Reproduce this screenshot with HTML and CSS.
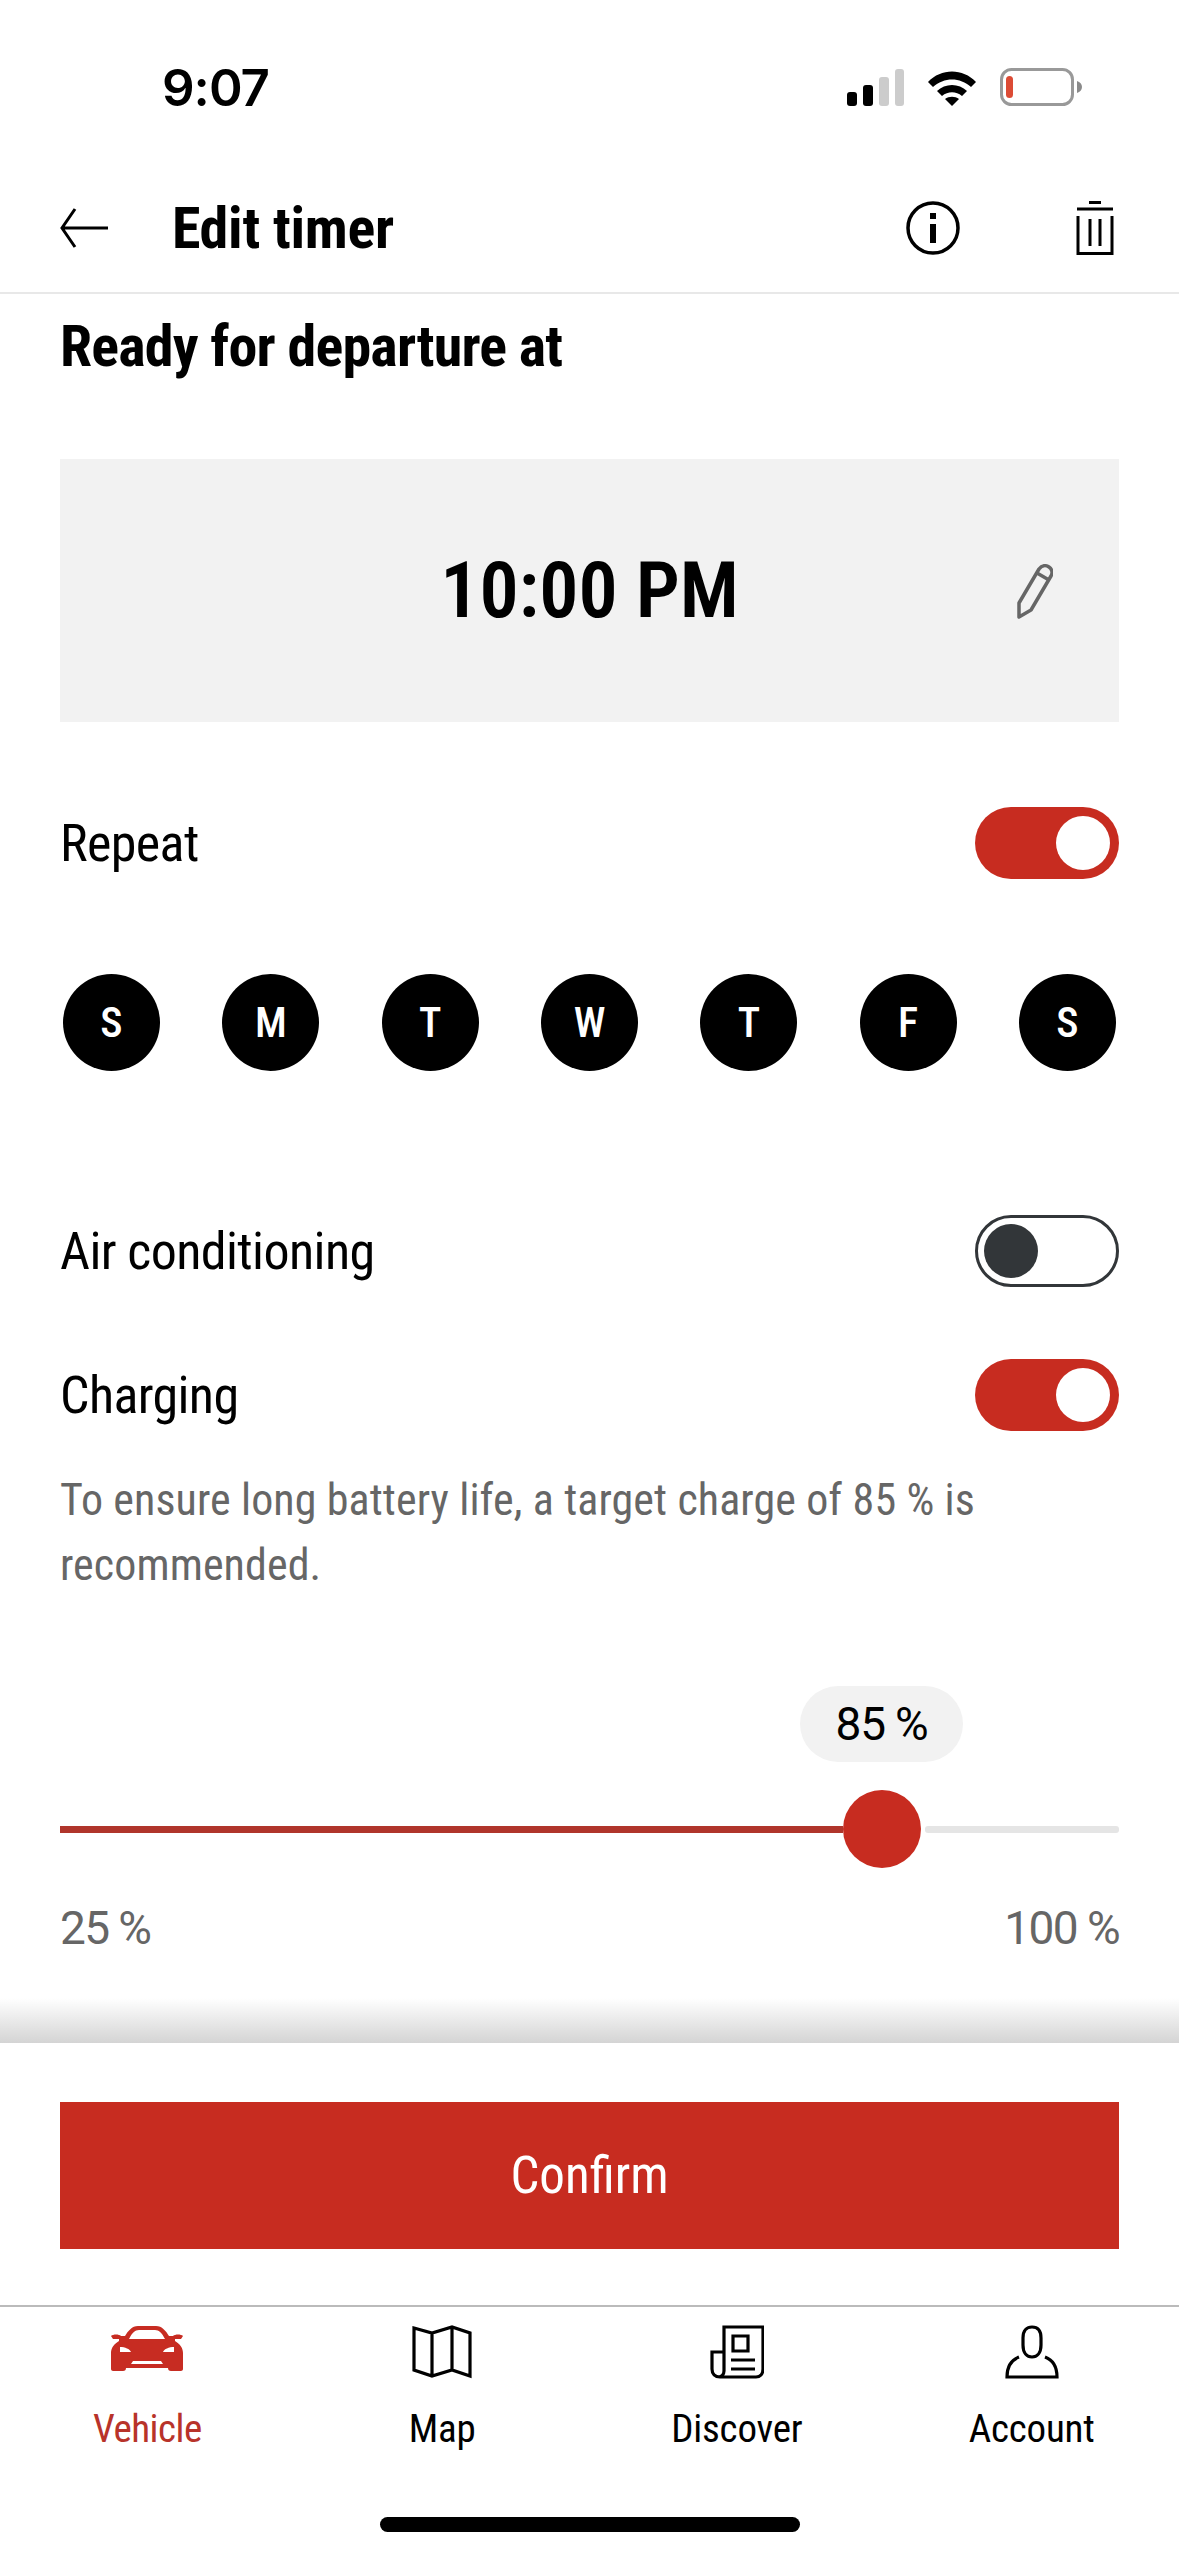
FILE: index.html
```html
<!doctype html>
<html lang="en">
    <head>
        <meta charset="UTF-8" />
        <meta name="viewport" content="width=device-width, initial-scale=1.0" />
        <title>Edit timer</title>
        <link rel="stylesheet" href="styles.css">
    </head>
    <body>
        <div class="screen">
            <!-- Status bar -->
            <div class="status-bar">
                <span class="clock">9:07</span>
                <div class="status-icons">
                    <svg class="signal" width="57" height="37" viewBox="0 0 57 37">
                        <rect x="0" y="23" width="10" height="14" rx="3" fill="#000" />
                        <rect x="16" y="16" width="10" height="21" rx="3" fill="#000" />
                        <rect x="32" y="8" width="10" height="29" rx="3" fill="#ccc" />
                        <rect x="48" y="0" width="9" height="37" rx="3" fill="#ccc" />
                    </svg>
                    <svg class="wifi" width="50" height="37" viewBox="0 0 50 37">
                        <path d="M1 13C14 -1 36 -1 49 13L44 18C33 8 17 8 6 18Z" fill="#000" />
                        <path d="M10 22C18 14 32 14 40 22L35 27C29 22 21 22 15 27Z" fill="#000" />
                        <path d="M18 30C22 27 28 27 32 30L25 37Z" fill="#000" />
                    </svg>
                    <svg class="battery" width="82" height="38" viewBox="0 0 82 38">
                        <rect x="1.5" y="1.5" width="71" height="35" rx="10" fill="#fff" stroke="#999" stroke-width="3" />
                        <rect x="6" y="8" width="7" height="22" rx="3.5" fill="#dc4b35" />
                        <path d="M77 13C80 14 82 16 82 19C82 22 80 24 77 25Z" fill="#8a8a8a" />
                    </svg>
                </div>
            </div>

            <!-- Header -->
            <div class="top-bar">
                <svg class="back" width="50" height="40" viewBox="0 0 50 40" fill="none" stroke="#000" stroke-width="3">
                    <path d="M48 20H3M15 1L2 20L15 39" />
                </svg>
                <h1>Edit timer</h1>
                <svg class="info" width="54" height="54" viewBox="0 0 54 54" fill="none" stroke="#000" stroke-width="3.5">
                    <circle cx="27" cy="27" r="25" />
                    <path d="M27 12V18M27 23V42" stroke-width="6" />
                </svg>
                <svg class="trash" width="38" height="54" viewBox="0 0 38 54" fill="none" stroke="#000" stroke-width="3">
                    <path d="M13 1.5H25M1 8H37M2 15V52.5H36V15M14 18V45M24 18V45" />
                </svg>
            </div>

            <!-- Timer settings -->
            <div class="content">
                <h2>Ready for departure at</h2>

                <div class="time-box">
                    <span class="time">10:00 PM</span>
                    <svg class="pencil" width="36" height="56" viewBox="0 0 36 56" fill="none" stroke="#666" stroke-width="3.5" stroke-linejoin="round">
                        <path d="M2 53V39L22 5C25 1 29 1 32 3C35 5 36 9 34 12L14 46Z" />
                        <path d="M20 9L32 16" />
                    </svg>
                </div>

                <div class="row row-repeat">
                    <span>Repeat</span>
                    <div class="toggle on"><span class="knob"></span></div>
                </div>

                <div class="days">
                    <span class="day">S</span>
                    <span class="day">M</span>
                    <span class="day">T</span>
                    <span class="day">W</span>
                    <span class="day">T</span>
                    <span class="day">F</span>
                    <span class="day">S</span>
                </div>

                <div class="row row-air">
                    <span>Air conditioning</span>
                    <div class="toggle off"><span class="knob"></span></div>
                </div>

                <div class="row row-charging">
                    <span>Charging</span>
                    <div class="toggle on"><span class="knob"></span></div>
                </div>

                <p class="hint">To ensure long battery life, a target charge of 85 % is recommended.</p>

                <!-- Target charge slider -->
                <div class="pill">85 %</div>
                <div class="slider">
                    <span class="slider-fill"></span>
                    <span class="slider-thumb"></span>
                    <span class="slider-rest"></span>
                </div>
                <div class="slider-labels">
                    <span>25 %</span>
                    <span>100 %</span>
                </div>
            </div>

            <!-- Confirm area -->
            <div class="shade"></div>
            <div class="footer">
                <button class="confirm">Confirm</button>
            </div>

            <!-- Bottom tabs -->
            <nav class="tabs">
                <div class="tab active">
                    <svg width="72" height="54" viewBox="0 0 72 54" fill="#c72c22">
                        <path fill-rule="evenodd" d="M14 11C17 6 21 1 27 1H45C51 1 55 6 58 11H62C64 9 70 9 72 11L70 14H64V16C69 19 72 23 72 28V44C72 45 71 46 70 46H60C58 46 57 45 57 43H15C15 45 14 46 12 46H2C1 46 0 45 0 44V28C0 23 3 19 8 16V14H2L0 11C2 9 8 9 10 11ZM18 14H54C51 8 48 5 44 5H28C24 5 21 8 18 14ZM9 22V27H20C19 24 14 22 9 22ZM63 22C58 22 53 24 52 27H63ZM22 36L20 39H52L50 36Z" />
                    </svg>
                    <span>Vehicle</span>
                </div>
                <div class="tab">
                    <svg width="60" height="54" viewBox="0 0 60 54" fill="none" stroke="#000" stroke-width="3.2">
                        <path d="M2 3L20 8L40 2L58 8V51L40 45L20 51L2 45ZM20 8V51M40 2V45" />
                    </svg>
                    <span>Map</span>
                </div>
                <div class="tab">
                    <svg width="54" height="54" viewBox="0 0 54 54" fill="none" stroke="#000" stroke-width="3.2">
                        <path d="M14 27V2H53V44C53 49 50 52 46 52H10C5 52 2 49 2 44V27H14V46C14 50 11 52 9 52" />
                        <path d="M23 11H38V26H23ZM21 35H45M21 44H45" />
                    </svg>
                    <span>Discover</span>
                </div>
                <div class="tab">
                    <svg width="54" height="54" viewBox="0 0 54 54" fill="none" stroke="#000" stroke-width="3.2">
                        <path d="M18 13C18 5 22 2 27 2C32 2 36 5 36 13V20C36 28 32 32 27 32C22 32 18 28 18 20Z" />
                        <path d="M14 32C6 35 2 41 2 52H52C52 41 48 35 40 32" />
                    </svg>
                    <span>Account</span>
                </div>
            </nav>
            <div class="home-bar"></div>
        </div>
    </body>
</html>
```

FILE: styles.css
```css
body {
    font-family: Roboto, sans-serif;
    font-stretch: 75%;
    background-color: #fff;
    color: #000;
    margin: 0;
    padding: 0;
}

.screen {
    width: 1179px;
    height: 2556px;
    overflow: hidden;
    display: flex;
    flex-direction: column;
}

/* Status bar */
.status-bar {
    height: 174px;
    padding: 0 97px 0 162px;
    box-sizing: border-box;
    display: flex;
    justify-content: space-between;
    align-items: center;
}

.clock {
    font-family: Inter, sans-serif;
    font-size: 51px;
    font-weight: 600;
    letter-spacing: -1px;
}

.status-icons {
    display: flex;
    align-items: center;
    gap: 23px;
}

/* Header */
.top-bar {
    height: 120px;
    padding: 0 65px 10px 60px;
    box-sizing: border-box;
    border-bottom: 2px solid #e8e8e8;
    display: flex;
    align-items: center;
}

h1 {
    flex: 1;
    margin: 0 0 0 62px;
    font-size: 58px;
    font-weight: 700;
    letter-spacing: -0.3px;
}

.info {
    margin-right: 116px;
}

h2 {
    margin: 0;
    padding-top: 18px;
    height: 165px;
    box-sizing: border-box;
    font-size: 58px;
    font-weight: 700;
    letter-spacing: -0.8px;
}

.content {
    padding: 0 60px;
    flex: 1;
}

.time-box {
    height: 263px;
    background-color: #f2f2f2;
    display: flex;
    justify-content: center;
    align-items: center;
    position: relative;
}

.time {
    font-size: 78px;
    font-weight: 600;
}

.pencil {
    position: absolute;
    right: 66px;
    top: 105px;
}

.row {
    display: flex;
    justify-content: space-between;
    align-items: center;
    font-size: 52px;
    letter-spacing: -0.6px;
}

.row-repeat {
    margin-top: 85px;
}

.row-air {
    margin-top: 144px;
}

.row-charging {
    margin-top: 72px;
}

.toggle {
    width: 144px;
    height: 72px;
    border-radius: 36px;
    box-sizing: border-box;
    padding: 9px;
    display: flex;
}

.toggle.on {
    background-color: #c72c20;
    justify-content: flex-end;
}

.toggle.off {
    border: 3px solid #323639;
    padding: 6px;
}

.knob {
    width: 54px;
    height: 54px;
    border-radius: 50%;
    background-color: #fff;
}

.toggle.off .knob {
    background-color: #323639;
}

.days {
    margin-top: 95px;
    padding: 0 3px;
    display: flex;
    justify-content: space-between;
}

.day {
    width: 97px;
    height: 97px;
    border-radius: 50%;
    background-color: #000;
    color: #fff;
    font-size: 42px;
    font-weight: 500;
    display: flex;
    justify-content: center;
    align-items: center;
}

.hint {
    margin: 37px 0 0;
    font-size: 44px;
    line-height: 65px;
    letter-spacing: 0.1px;
    color: #666;
}

.pill {
    width: 163px;
    height: 76px;
    margin: 88px 0 0 740px;
    border-radius: 38px;
    background-color: #f2f2f2;
    font-size: 46px;
    font-stretch: 100%;
    letter-spacing: -1.2px;
    display: flex;
    justify-content: center;
    align-items: center;
}

.slider {
    margin-top: 28px;
    display: flex;
    align-items: center;
}

.slider-fill {
    width: 783px;
    height: 7px;
    background-color: #b0352b;
}

.slider-thumb {
    width: 78px;
    height: 78px;
    margin-right: 4px;
    border-radius: 50%;
    background-color: #c72c20;
}

.slider-rest {
    flex: 1;
    height: 7px;
    border-radius: 3px;
    background-color: #e5e5e5;
}

.slider-labels {
    margin-top: 33px;
    display: flex;
    justify-content: space-between;
    font-size: 46px;
    font-stretch: 100%;
    letter-spacing: -1.6px;
    color: #666;
}

/* Confirm area */
.shade {
    height: 45px;
    background: linear-gradient(to bottom, #fff, #d4d4d4);
}

.footer {
    height: 264px;
    padding: 59px 60px 0;
    box-sizing: border-box;
    border-bottom: 2px solid #bbb;
}

.confirm {
    width: 100%;
    height: 147px;
    border: none;
    background-color: #c72c20;
    color: #fff;
    font-family: inherit;
    font-stretch: inherit;
    font-size: 51px;
}

/* Bottom tabs */
.tabs {
    height: 210px;
    padding-top: 18px;
    box-sizing: border-box;
    display: grid;
    grid-template-columns: repeat(4, 1fr);
}

.tab {
    display: flex;
    flex-direction: column;
    align-items: center;
    gap: 27px;
    font-size: 39px;
    letter-spacing: -0.2px;
}

.tab.active {
    color: #b8332a;
    letter-spacing: -0.5px;
}

.home-bar {
    width: 420px;
    height: 15px;
    margin: 0 auto 24px;
    border-radius: 8px;
    background-color: #000;
    flex-shrink: 0;
}
```
